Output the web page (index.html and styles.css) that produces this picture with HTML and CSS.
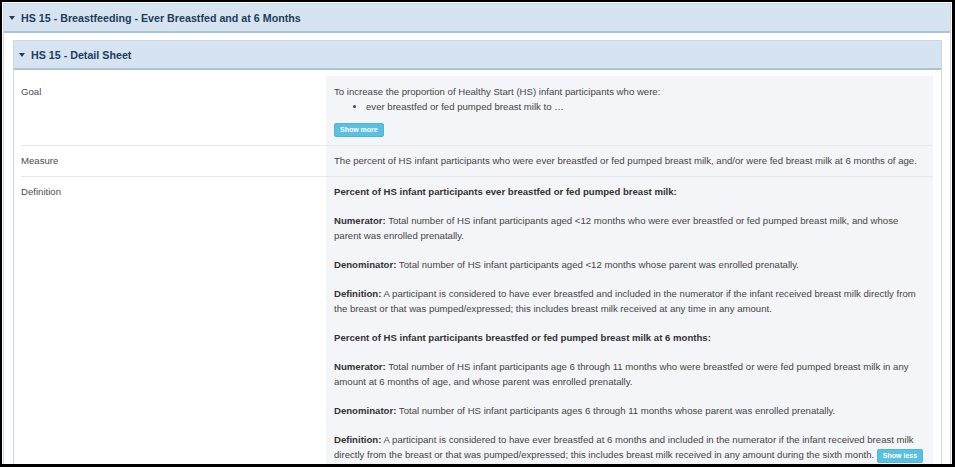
FILE: index.html
```html
<!DOCTYPE html>
<html lang="en">
<head>
    <meta charset="UTF-8">
    <title>HS 15 - Detail Sheet</title>
    <link rel="stylesheet" href="styles.css">
</head>
<body>

<div class="frame">
    <div class="panel outer">
        <div class="panel-heading"><span class="caret"></span>HS 15 - Breastfeeding - Ever Breastfed and at 6 Months</div>
        <div class="panel-body">
            <div class="panel inner">
                <div class="panel-heading"><span class="caret"></span>HS 15 - Detail Sheet</div>
                <div class="panel-body">
                    <table class="detail">
                        <tr>
                            <th>Goal</th>
                            <td>
                                <div>To increase the proportion of Healthy Start (HS) infant participants who were:</div>
                                <ul>
                                    <li>ever breastfed or fed pumped breast milk to …</li>
                                </ul>
                                <button type="button" class="btn-toggle">Show more</button>
                            </td>
                        </tr>
                        <tr>
                            <th>Measure</th>
                            <td>The percent of HS infant participants who were ever breastfed or fed pumped breast milk, and/or were fed breast milk at 6 months of age.</td>
                        </tr>
                        <tr>
                            <th>Definition</th>
                            <td>
                                <p><b>Percent of HS infant participants ever breastfed or fed pumped breast milk:</b></p>
                                <p><b>Numerator:</b> Total number of HS infant participants aged &lt;12 months who were ever breastfed or fed pumped breast milk, and whose parent was enrolled prenatally.</p>
                                <p><b>Denominator:</b> Total number of HS infant participants aged &lt;12 months whose parent was enrolled prenatally.</p>
                                <p><b>Definition:</b> A participant is considered to have ever breastfed and included in the numerator if the infant received breast milk directly from the breast or that was pumped/expressed; this includes breast milk received at any time in any amount.</p>
                                <p><b>Percent of HS infant participants breastfed or fed pumped breast milk at 6 months:</b></p>
                                <p><b>Numerator:</b> Total number of HS infant participants age 6 through 11 months who were breastfed or were fed pumped breast milk in any amount at 6 months of age, and whose parent was enrolled prenatally.</p>
                                <p><b>Denominator:</b> Total number of HS infant participants ages 6 through 11 months whose parent was enrolled prenatally.</p>
                                <p><b>Definition:</b> A participant is considered to have ever breastfed at 6 months and included in the numerator if the infant received breast milk directly from the breast or that was pumped/expressed; this includes breast milk received in any amount during the sixth month. <button type="button" class="btn-toggle">Show less</button></p>
                            </td>
                        </tr>
                    </table>
                </div>
            </div>
        </div>
    </div>
</div>

</body>
</html>
```

FILE: styles.css
```css
body {
    margin: 0;
    font-family: "Liberation Sans", Arial, sans-serif;
    background-color: white;
}
.frame {
    width: 955px;
    height: 467px;
    box-sizing: border-box;
    border-style: solid;
    border-color: #000;
    border-width: 2px 3px 3px 2px;
    padding: 1px 1px 0 1px;
    overflow: hidden;
}
.panel {
    border: 1px solid #c9d9e6;
    background-color: white;
}
.panel-heading {
    display: flex;
    align-items: center;
    height: 27px;
    padding-left: 5px;
    background-color: #d5e4f0;
    border-bottom: 2px solid #a9c3d7;
    color: #1d3d5d;
    font-size: 10.7px;
    font-weight: bold;
}
.caret {
    width: 0;
    height: 0;
    margin-right: 6px;
    border-left: 3.5px solid transparent;
    border-right: 3.5px solid transparent;
    border-top: 4px solid #1d3d5d;
}
.outer > .panel-body {
    padding: 7px 8px 0 9px;
}
.inner > .panel-body {
    padding: 6px 8px 0 7px;
}
.detail {
    width: 100%;
    border-collapse: collapse;
    font-size: 9.6px;
    line-height: 15px;
    color: #454545;
}
.detail th {
    width: 305px;
    padding: 7px 0 8px 0;
    text-align: left;
    vertical-align: top;
    font-weight: normal;
    color: #4d4d4d;
}
.detail td {
    padding: 7px 8px 8px 8px;
    vertical-align: top;
    background-color: #f4f5f9;
}
.detail tr:first-child th,
.detail tr:first-child td {
    padding-top: 8px;
}
.detail tr + tr th,
.detail tr + tr td {
    border-top: 1px solid #e6e8ec;
}
.detail ul {
    margin: 0 0 8px 0;
    padding-left: 32px;
}
.detail p {
    margin: 0 0 14px 0;
}
.detail b {
    color: #333;
}
.btn-toggle {
    padding: 2px 5px;
    border: 1px solid #46b8da;
    border-radius: 2px;
    background-color: #5bc0de;
    color: white;
    font-family: inherit;
    font-size: 7px;
    font-weight: bold;
    line-height: 8px;
    vertical-align: middle;
}
```
